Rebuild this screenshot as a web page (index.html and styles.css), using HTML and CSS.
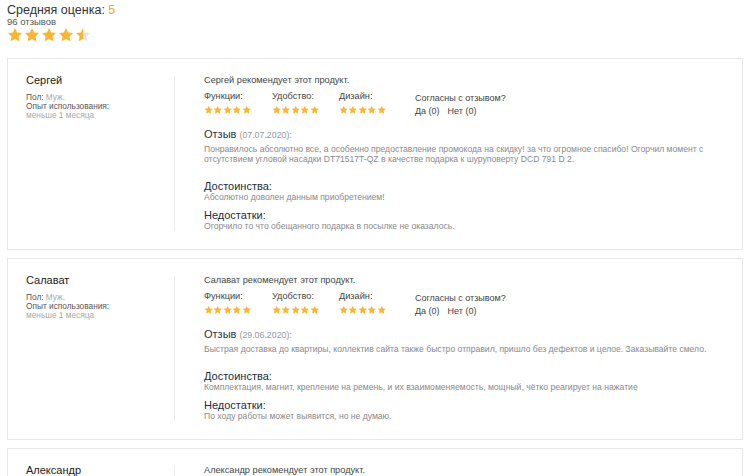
FILE: index.html
```html
<!DOCTYPE html>
<html lang="ru">
<head>
    <meta charset="UTF-8">
    <meta name="viewport" content="width=device-width, initial-scale=1.0">
    <title>Отзывы</title>
    <link rel="stylesheet" href="styles.css">
</head>
<body>
    <svg class="defs" width="0" height="0">
        <defs>
            <symbol id="star" viewBox="0 0 24 24">
                <path d="M12 1.5l3.2 6.6 7.3 1-5.3 5.1 1.3 7.2L12 18l-6.5 3.4 1.3-7.2-5.3-5.1 7.3-1z"/>
            </symbol>
            <linearGradient id="half">
                <stop offset="50%" stop-color="#fbb531"/>
                <stop offset="50%" stop-color="#e4e4e4"/>
            </linearGradient>
        </defs>
    </svg>

    <div class="summary">
        <div class="summary-title">Средняя оценка: <span class="score">5</span></div>
        <div class="summary-count">96 отзывов</div>
        <div class="big-stars">
            <svg><use href="#star"/></svg>
            <svg><use href="#star"/></svg>
            <svg><use href="#star"/></svg>
            <svg><use href="#star"/></svg>
            <svg class="half"><use href="#star"/></svg>
        </div>
    </div>

    <div class="review">
        <div class="author">
            <div class="author-name">Сергей</div>
            <div class="author-info">
                <div>Пол: <span class="muted">Муж.</span></div>
                <div>Опыт использования:</div>
                <div class="muted">меньше 1 месяца</div>
            </div>
        </div>
        <div class="divider"></div>
        <div class="review-body">
            <div class="recommend">Сергей рекомендует этот продукт.</div>
            <div class="ratings">
                <div class="rating">
                    <div class="rating-label">Функции:</div>
                    <div class="small-stars"><svg><use href="#star"/></svg><svg><use href="#star"/></svg><svg><use href="#star"/></svg><svg><use href="#star"/></svg><svg><use href="#star"/></svg></div>
                </div>
                <div class="rating">
                    <div class="rating-label">Удобство:</div>
                    <div class="small-stars"><svg><use href="#star"/></svg><svg><use href="#star"/></svg><svg><use href="#star"/></svg><svg><use href="#star"/></svg><svg><use href="#star"/></svg></div>
                </div>
                <div class="rating">
                    <div class="rating-label">Дизайн:</div>
                    <div class="small-stars"><svg><use href="#star"/></svg><svg><use href="#star"/></svg><svg><use href="#star"/></svg><svg><use href="#star"/></svg><svg><use href="#star"/></svg></div>
                </div>
                <div class="agree">
                    <div class="agree-title">Согласны с отзывом?</div>
                    <div class="agree-votes"><span>Да (0)</span><span>Нет (0)</span></div>
                </div>
            </div>
            <div class="review-title">Отзыв <span class="date">(07.07.2020):</span></div>
            <div class="review-text">Понравилось абсолютно все, а особенно предоставление промокода на скидку! за что огромное спасибо! Огорчил момент с отсутствием угловой насадки DT71517T-QZ в качестве подарка к шуруповерту DCD 791 D 2.</div>
            <div class="section-title pros">Достоинства:</div>
            <div class="section-text">Абсолютно доволен данным приобретением!</div>
            <div class="section-title">Недостатки:</div>
            <div class="section-text">Огорчило то что обещанного подарка в посылке не оказалось.</div>
        </div>
    </div>

    <div class="review">
        <div class="author">
            <div class="author-name">Салават</div>
            <div class="author-info">
                <div>Пол: <span class="muted">Муж.</span></div>
                <div>Опыт использования:</div>
                <div class="muted">меньше 1 месяца</div>
            </div>
        </div>
        <div class="divider"></div>
        <div class="review-body">
            <div class="recommend">Салават рекомендует этот продукт.</div>
            <div class="ratings">
                <div class="rating">
                    <div class="rating-label">Функции:</div>
                    <div class="small-stars"><svg><use href="#star"/></svg><svg><use href="#star"/></svg><svg><use href="#star"/></svg><svg><use href="#star"/></svg><svg><use href="#star"/></svg></div>
                </div>
                <div class="rating">
                    <div class="rating-label">Удобство:</div>
                    <div class="small-stars"><svg><use href="#star"/></svg><svg><use href="#star"/></svg><svg><use href="#star"/></svg><svg><use href="#star"/></svg><svg><use href="#star"/></svg></div>
                </div>
                <div class="rating">
                    <div class="rating-label">Дизайн:</div>
                    <div class="small-stars"><svg><use href="#star"/></svg><svg><use href="#star"/></svg><svg><use href="#star"/></svg><svg><use href="#star"/></svg><svg><use href="#star"/></svg></div>
                </div>
                <div class="agree">
                    <div class="agree-title">Согласны с отзывом?</div>
                    <div class="agree-votes"><span>Да (0)</span><span>Нет (0)</span></div>
                </div>
            </div>
            <div class="review-title">Отзыв <span class="date">(29.06.2020):</span></div>
            <div class="review-text">Быстрая доставка до квартиры, коллектив сайта также быстро отправил, пришло без дефектов и целое. Заказывайте смело.</div>
            <div class="section-title pros">Достоинства:</div>
            <div class="section-text">Комплектация, магнит, крепление на ремень, и их взаимоменяемость, мощный, чётко реагирует на нажатие</div>
            <div class="section-title">Недостатки:</div>
            <div class="section-text">По ходу работы может выявится, но не думаю.</div>
        </div>
    </div>

    <div class="review">
        <div class="author">
            <div class="author-name">Александр</div>
            <div class="author-info">
                <div>Пол: <span class="muted">Муж.</span></div>
                <div>Опыт использования:</div>
                <div class="muted">меньше 1 месяца</div>
            </div>
        </div>
        <div class="divider"></div>
        <div class="review-body">
            <div class="recommend">Александр рекомендует этот продукт.</div>
            <div class="ratings">
                <div class="rating">
                    <div class="rating-label">Функции:</div>
                    <div class="small-stars"><svg><use href="#star"/></svg><svg><use href="#star"/></svg><svg><use href="#star"/></svg><svg><use href="#star"/></svg><svg><use href="#star"/></svg></div>
                </div>
                <div class="rating">
                    <div class="rating-label">Удобство:</div>
                    <div class="small-stars"><svg><use href="#star"/></svg><svg><use href="#star"/></svg><svg><use href="#star"/></svg><svg><use href="#star"/></svg><svg><use href="#star"/></svg></div>
                </div>
                <div class="rating">
                    <div class="rating-label">Дизайн:</div>
                    <div class="small-stars"><svg><use href="#star"/></svg><svg><use href="#star"/></svg><svg><use href="#star"/></svg><svg><use href="#star"/></svg><svg><use href="#star"/></svg></div>
                </div>
                <div class="agree">
                    <div class="agree-title">Согласны с отзывом?</div>
                    <div class="agree-votes"><span>Да (0)</span><span>Нет (0)</span></div>
                </div>
            </div>
            <div class="review-title">Отзыв <span class="date">(21.06.2020):</span></div>
            <div class="review-text">Отличный шуруповерт, всё работает.</div>
        </div>
    </div>
</body>
</html>
```

FILE: styles.css
```css
body {
    margin: 0;
    padding: 0 7px;
    background: #fff;
    font-family: "Liberation Sans", Arial, sans-serif;
    color: #333;
}
.defs {
    position: absolute;
}
.summary {
    padding-top: 3px;
    margin-bottom: 15px;
}
.summary-title {
    font-size: 12.5px;
    line-height: 14px;
    color: #333;
}
.score {
    color: #f5a623;
}
.summary-count {
    font-size: 9.5px;
    line-height: 10px;
    color: #555;
}
.big-stars {
    display: flex;
    gap: 1px;
    height: 16px;
}
.big-stars svg {
    width: 16px;
    height: 16px;
    fill: #fbb531;
}
.big-stars svg.half {
    fill: url(#half);
}
.review {
    display: grid;
    grid-template-columns: 148px 1px 1fr;
    border: 1px solid #e8e8e8;
    padding: 15px 18px 18px 18px;
    margin-bottom: 8px;
}
.author-name {
    font-size: 11px;
    line-height: 13px;
    color: #222;
}
.author-info {
    margin-top: 6px;
    font-size: 8.3px;
    line-height: 9px;
    color: #555;
}
.muted {
    color: #aaa;
}
.divider {
    background: #ececec;
    margin-top: 2px;
}
.review-body {
    margin-left: 29px;
}
.recommend {
    font-size: 9.2px;
    line-height: 12px;
    color: #444;
}
.ratings {
    display: grid;
    grid-template-columns: 68px 67px 76px auto;
    margin-top: 4px;
}
.rating-label {
    font-size: 9.2px;
    line-height: 12px;
    color: #444;
}
.small-stars {
    display: flex;
    margin-top: 3px;
    height: 10px;
}
.small-stars svg {
    width: 9.4px;
    height: 10px;
    fill: #fbb531;
}
.agree {
    padding-top: 2px;
    font-size: 9px;
    color: #444;
}
.agree-title {
    line-height: 12px;
}
.agree-votes {
    display: flex;
    gap: 8px;
    margin-top: 1px;
    line-height: 12px;
}
.review-title {
    margin-top: 10px;
    font-size: 11px;
    line-height: 14px;
    color: #2a3342;
}
.date {
    font-size: 8.8px;
    color: #999;
}
.review-text {
    margin-top: 2px;
    font-size: 8.6px;
    line-height: 10px;
    color: #8a8a8a;
    padding-right: 10px;
}
.section-title {
    margin-top: 7px;
    font-size: 11px;
    line-height: 12px;
    color: #1f2b3a;
}
.section-title.pros {
    margin-top: 16px;
}
.section-text {
    font-size: 8.6px;
    line-height: 10px;
    color: #8a8a8a;
}
```
